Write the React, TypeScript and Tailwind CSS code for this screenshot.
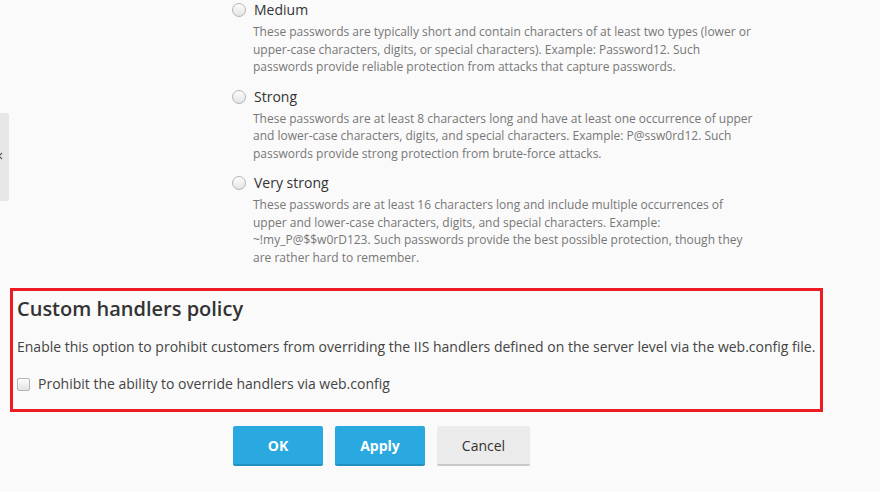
import React from "react"

const levels = [
  {
    label: "Medium",
    text: "These passwords are typically short and contain characters of at least two types (lower or upper-case characters, digits, or special characters). Example: Password12. Such passwords provide reliable protection from attacks that capture passwords.",
  },
  {
    label: "Strong",
    text: "These passwords are at least 8 characters long and have at least one occurrence of upper and lower-case characters, digits, and special characters. Example: P@ssw0rd12. Such passwords provide strong protection from brute-force attacks.",
  },
  {
    label: "Very strong",
    text: "These passwords are at least 16 characters long and include multiple occurrences of upper and lower-case characters, digits, and special characters. Example: ~!my_P@$$w0rD123. Such passwords provide the best possible protection, though they are rather hard to remember.",
  },
]

export default function App() {
  return (
    <div className="relative w-[880px] h-[492px] overflow-hidden bg-[#fafafa] text-[#333] font-['Open_Sans',sans-serif]">
      {/* collapsed side tab */}
      <div className="absolute left-0 top-[113px] w-[9px] h-[88px] rounded-r-[3px] bg-[#e6e6e6] overflow-hidden">
        <svg className="absolute -left-[3px] top-[39px]" width="6" height="8" viewBox="0 0 6 8" fill="none">
          <path d="M5 1 L2 4 L5 7" stroke="#555" strokeWidth="1.2" />
        </svg>
      </div>

      {/* Password strength options */}
      <div className="pl-[232px] flex flex-col gap-[11px]">
        {levels.map((lvl) => (
          <div key={lvl.label} className="flex flex-col">
            <label className="flex items-center gap-[8px] h-[20px] text-[14px] leading-[20px] text-[#333]">
              <span className="w-[14px] h-[14px] rounded-full border border-[#b5b5b5] bg-gradient-to-b from-[#fdfdfd] to-[#e4e4e4] shrink-0" />
              {lvl.label}
            </label>
            <p className="ml-[21px] mt-[3px] w-[505px] text-[12px] leading-[17.5px] text-[#777]">
              {lvl.text}
            </p>
          </div>
        ))}
      </div>

      {/* Custom handlers policy */}
      <div className="ml-[10px] mt-[22px] w-[813px] border-[3px] border-[#ed1c24] pl-[4px] pt-[6px] pb-[15px]">
        <h3 className="text-[20px] leading-[24px] font-semibold text-[#333]">Custom handlers policy</h3>
        <p className="mt-[16px] text-[14px] leading-[20px] text-[#444]">
          Enable this option to prohibit customers from overriding the IIS handlers defined on the server level via the web.config file.
        </p>
        <label className="mt-[17px] flex items-center gap-[8px] h-[20px] text-[14px] leading-[20px] text-[#444]">
          <span className="w-[13px] h-[13px] rounded-[2px] border border-[#b5b5b5] bg-gradient-to-b from-[#fdfdfd] to-[#e4e4e4] shrink-0" />
          Prohibit the ability to override handlers via web.config
        </label>
      </div>

      {/* Buttons */}
      <div className="pl-[233px] mt-[14px] flex gap-[12px]">
        <button className="w-[90px] h-[40px] rounded-[2px] bg-[#29a9df] border-b-2 border-[#2390c0] text-white text-[14px] font-bold">
          OK
        </button>
        <button className="w-[90px] h-[40px] rounded-[2px] bg-[#29a9df] border-b-2 border-[#2390c0] text-white text-[14px] font-bold">
          Apply
        </button>
        <button className="w-[93px] h-[40px] rounded-[2px] bg-[#ebebeb] border-b-2 border-[#c8c8c8] text-[#333] text-[14px]">
          Cancel
        </button>
      </div>
    </div>
  )
}
